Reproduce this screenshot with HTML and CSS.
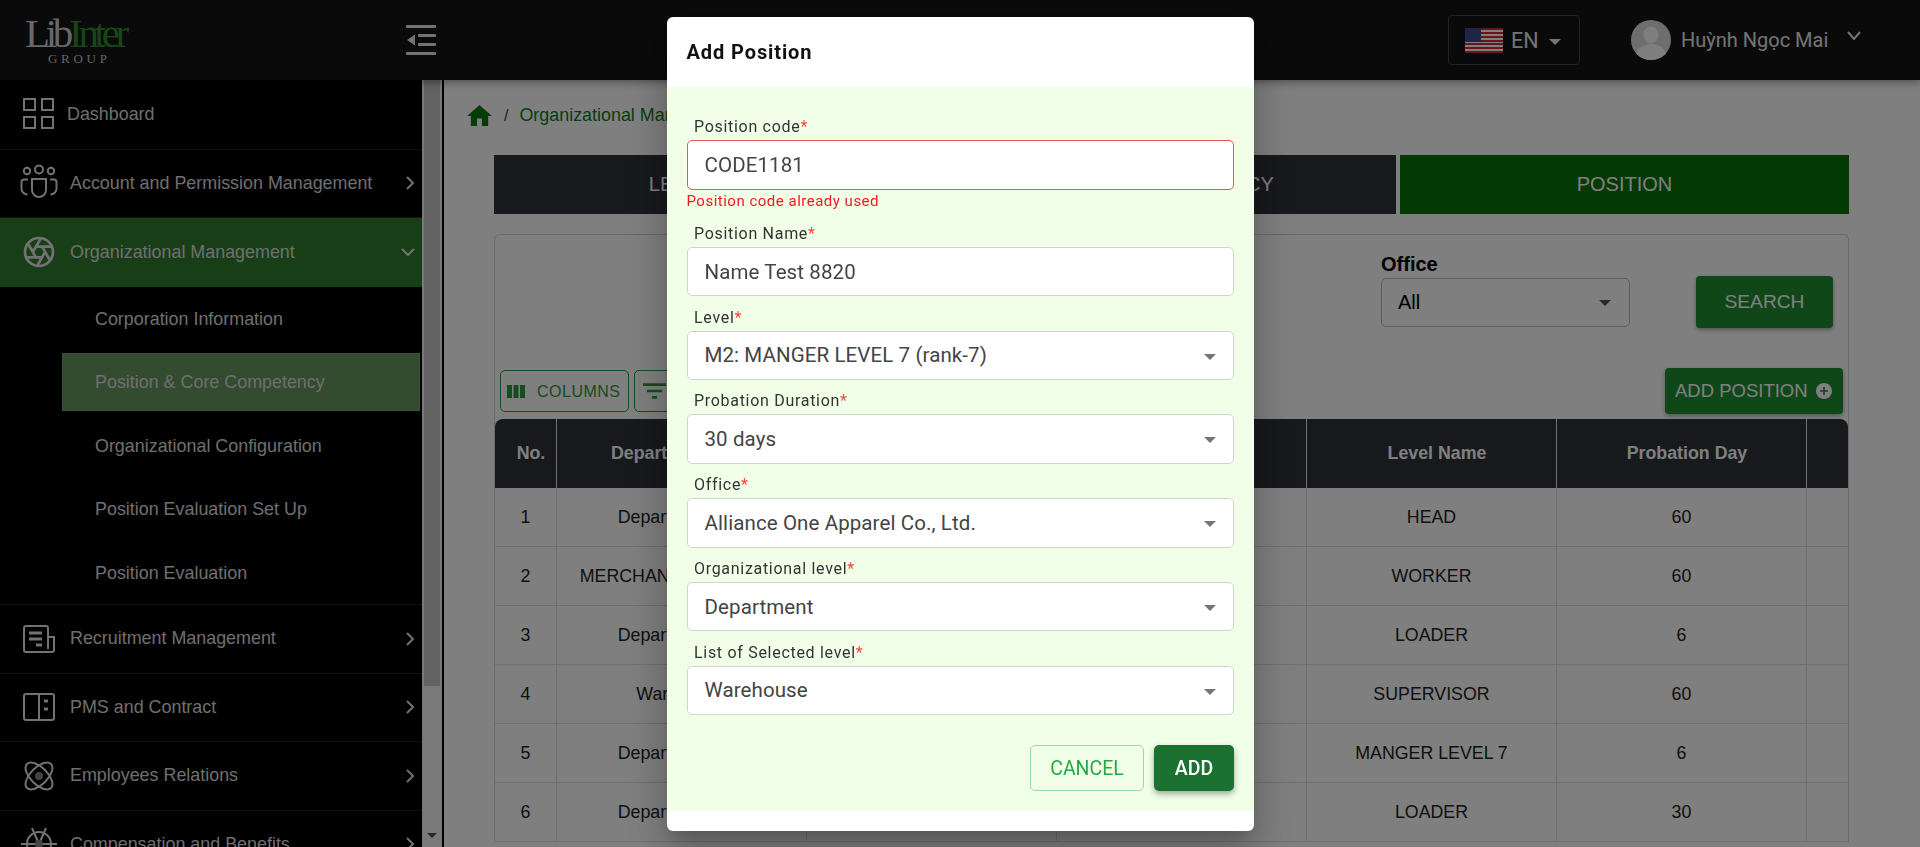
FILE: index.html
```html
<!DOCTYPE html>
<html lang="en">
<head>
  <meta charset="UTF-8">
  <title>Position &amp; Core Competency</title>
  <link rel="stylesheet" href="styles.css">
</head>
<body>
  <!-- Top bar -->
  <header class="topbar">
    <div class="logo">
      <div class="logo-word">Lib<span class="logo-green">Inter</span></div>
      <div class="logo-sub">GROUP</div>
    </div>
    <svg class="menu-toggle" viewBox="0 0 30 30" width="30" height="30">
      <rect x="0" y="0" width="30" height="3" rx="1"/>
      <rect x="12" y="9" width="18" height="3" rx="1"/>
      <rect x="12" y="18" width="18" height="3" rx="1"/>
      <rect x="0" y="27" width="30" height="3" rx="1"/>
      <polygon points="1,15 9,9.5 9,20.5"/>
    </svg>
    <div class="lang">
      <svg class="flag" viewBox="0 0 38 25" width="38" height="25">
        <rect width="38" height="25" fill="#fff"/>
        <g fill="#d8283c">
          <rect y="0" width="38" height="2"/><rect y="4" width="38" height="2"/>
          <rect y="8" width="38" height="2"/><rect y="12" width="38" height="2"/>
          <rect y="15" width="38" height="2"/><rect y="19" width="38" height="2"/>
          <rect y="23" width="38" height="2"/>
        </g>
        <rect width="16" height="14" fill="#3c4a8c"/>
      </svg>
      <span class="lang-code">EN</span>
      <span class="caret caret-light"></span>
    </div>
    <div class="user">
      <svg class="avatar" viewBox="0 0 40 40" width="40" height="40">
        <defs><clipPath id="avatarClip"><circle cx="20" cy="20" r="20"/></clipPath></defs>
        <circle cx="20" cy="20" r="20" fill="#dcdcdc"/>
        <g clip-path="url(#avatarClip)" fill="#fff">
          <ellipse cx="20" cy="15" rx="7.5" ry="8.5"/>
          <ellipse cx="20" cy="36" rx="15" ry="12"/>
        </g>
      </svg>
      <span class="user-name">Huỳnh Ngọc Mai</span>
      <svg class="user-chevron" viewBox="0 0 14 9" width="14" height="9"><polyline points="1,1 7,8 13,1"/></svg>
    </div>
  </header>

  <div class="layout">
    <!-- Sidebar -->
    <aside class="sidebar">
      <a class="nav-item nav-first">
        <svg class="nav-icon" viewBox="0 0 32 32" width="32" height="32">
          <rect x="1" y="1" width="11" height="11"/><rect x="19" y="1" width="11" height="11"/>
          <rect x="1" y="19" width="11" height="11"/><rect x="19" y="19" width="11" height="11"/>
        </svg>
        <span class="nav-label nav-label-tight">Dashboard</span>
      </a>
      <a class="nav-item">
        <svg class="nav-icon" viewBox="0 0 38 37" width="38" height="37">
          <circle cx="7" cy="6.500" r="3.200"/><circle cx="19" cy="5" r="4"/><circle cx="31" cy="6.500" r="3.200"/>
          <path d="M12 14.500h14v11a7 7 0 0 1-14 0z"/>
          <path d="M8 15H4a2.500 2.500 0 0 0-2.500 2.500V24a6 6 0 0 0 6 6"/>
          <path d="M30 15h4a2.500 2.500 0 0 1 2.500 2.500V24a6 6 0 0 1-6 6"/>
        </svg>
        <span class="nav-label">Account and Permission Management</span>
        <svg class="nav-arrow" viewBox="0 0 10 14" width="10" height="14"><polyline points="2,1 8,7 2,13"/></svg>
      </a>
      <a class="nav-item nav-open">
        <svg class="nav-icon" viewBox="0 0 24 24" width="32" height="32" stroke-width="1.500">
          <circle cx="12" cy="12" r="10.500"/>
          <path d="M14.310 8l5.740 9.940M9.690 8h11.480M7.380 12l5.740-9.940M9.690 16L3.950 6.060M14.310 16H2.830M16.620 12l-5.740 9.940"/>
        </svg>
        <span class="nav-label">Organizational Management</span>
        <svg class="nav-arrow" viewBox="0 0 14 10" width="14" height="10"><polyline points="1,2 7,8 13,2"/></svg>
      </a>
      <div class="subnav">
        <a class="subnav-item">Corporation Information</a>
        <a class="subnav-item active">Position &amp; Core Competency</a>
        <a class="subnav-item">Organizational Configuration</a>
        <a class="subnav-item">Position Evaluation Set Up</a>
        <a class="subnav-item">Position Evaluation</a>
      </div>
      <a class="nav-item nav-top">
        <svg class="nav-icon" viewBox="0 0 32 28" width="32" height="28">
          <path d="M25 24V3a2 2 0 0 0-2-2H3a2 2 0 0 0-2 2v22a2 2 0 0 0 2 2h26a2 2 0 0 0 2-2V12h-6"/>
          <path d="M6 8h13M6 14h13M13 20h6" stroke-width="3"/>
        </svg>
        <span class="nav-label">Recruitment Management</span>
        <svg class="nav-arrow" viewBox="0 0 10 14" width="10" height="14"><polyline points="2,1 8,7 2,13"/></svg>
      </a>
      <a class="nav-item">
        <svg class="nav-icon" viewBox="0 0 32 28" width="32" height="28">
          <rect x="1" y="1" width="30" height="26" rx="2"/>
          <path d="M16 1v26"/>
          <path d="M21 8h4M21 16h4" stroke-width="3"/>
        </svg>
        <span class="nav-label">PMS and Contract</span>
        <svg class="nav-arrow" viewBox="0 0 10 14" width="10" height="14"><polyline points="2,1 8,7 2,13"/></svg>
      </a>
      <a class="nav-item">
        <svg class="nav-icon" viewBox="0 0 32 32" width="32" height="32">
          <ellipse cx="16" cy="16" rx="17" ry="8.500" transform="rotate(45 16 16)"/>
          <ellipse cx="16" cy="16" rx="17" ry="8.500" transform="rotate(-45 16 16)"/>
          <circle class="icon-dot" cx="16" cy="16" r="4"/>
        </svg>
        <span class="nav-label">Employees Relations</span>
        <svg class="nav-arrow" viewBox="0 0 10 14" width="10" height="14"><polyline points="2,1 8,7 2,13"/></svg>
      </a>
      <a class="nav-item">
        <svg class="nav-icon" viewBox="0 0 36 36" width="36" height="36">
          <circle cx="18" cy="18" r="12"/>
          <path d="M18 18L11 2M18 18L25 2M0 18h36M18 18v16"/>
          <circle class="icon-dot" cx="18" cy="18" r="4"/>
        </svg>
        <span class="nav-label">Compensation and Benefits</span>
        <svg class="nav-arrow" viewBox="0 0 10 14" width="10" height="14"><polyline points="2,1 8,7 2,13"/></svg>
      </a>
    </aside>
    <div class="rail">
      <div class="rail-thumb"></div>
      <div class="rail-arrow"></div>
    </div>

    <!-- Main content -->
    <main class="content">
      <nav class="crumbs">
        <svg class="crumb-home" viewBox="2 3 20 17" width="25" height="21"><path d="M10 20v-6h4v6h5v-8h3L12 3 2 12h3v8z"/></svg>
        <span class="crumb-sep">/</span>
        <span class="crumb-link">Organizational Management</span>
      </nav>

      <div class="tabs">
        <div class="tab tab-level">LEVEL</div>
        <div class="tab tab-core">POSITION CORE COMPETENCY</div>
        <div class="tab tab-position">POSITION</div>
      </div>

      <section class="panel">
        <div class="filters">
          <div class="filter-field">
            <label class="filter-label">Office</label>
            <div class="filter-select">All<span class="caret caret-dark"></span></div>
          </div>
          <button class="btn-solid btn-search">SEARCH</button>
        </div>

        <div class="toolbar">
          <button class="btn-outline btn-columns">
            <svg viewBox="0 0 18 13" width="18" height="13"><rect width="5" height="13"/><rect x="6.500" width="5" height="13"/><rect x="13" width="5" height="13"/></svg>
            <span class="btn-text">COLUMNS</span>
          </button>
          <button class="btn-outline btn-filters">
            <svg viewBox="3 6 18 12" width="23" height="16"><path d="M10 18h4v-2h-4v2zM3 6v2h18V6H3zm3 7h12v-2H6v2z"/></svg>
            <span class="btn-text">FILTERS</span>
          </button>
          <button class="btn-solid btn-add">
            ADD POSITION
            <svg viewBox="2 2 20 20" width="16" height="16"><path d="M12 2C6.480 2 2 6.480 2 12s4.480 10 10 10 10-4.480 10-10S17.520 2 12 2zm5 11h-4v4h-2v-4H7v-2h4V7h2v4h4v2z"/></svg>
          </button>
        </div>

        <table class="grid">
          <colgroup>
            <col class="col-no"><col class="col-wide"><col class="col-wide"><col class="col-wide">
            <col class="col-wide"><col class="col-wide"><col class="col-end">
          </colgroup>
          <thead>
            <tr>
              <th>No.</th><th>Department Name</th><th>Position Code</th><th>Position Name</th>
              <th>Level Name</th><th>Probation Day</th><th></th>
            </tr>
          </thead>
          <tbody>
            <tr><td>1</td><td>Department 123</td><td></td><td></td><td>HEAD</td><td>60</td><td></td></tr>
            <tr><td>2</td><td>MERCHANDISING DEPT</td><td></td><td></td><td>WORKER</td><td>60</td><td></td></tr>
            <tr><td>3</td><td>Department 123</td><td></td><td></td><td>LOADER</td><td>6</td><td></td></tr>
            <tr><td>4</td><td>Warehouse</td><td></td><td></td><td>SUPERVISOR</td><td>60</td><td></td></tr>
            <tr><td>5</td><td>Department 123</td><td></td><td></td><td>MANGER LEVEL 7</td><td>6</td><td></td></tr>
            <tr><td>6</td><td>Department 123</td><td></td><td></td><td>LOADER</td><td>30</td><td></td></tr>
          </tbody>
        </table>
      </section>
    </main>
  </div>

  <!-- Add Position dialog -->
  <div class="backdrop"></div>
  <div class="modal">
    <h2 class="modal-title">Add Position</h2>
    <form class="modal-body">
      <div class="field">
        <label>Position code<span class="req">*</span></label>
        <input class="control control-error" type="text" value="CODE1181">
        <div class="field-error">Position code already used</div>
      </div>
      <div class="field">
        <label>Position Name<span class="req">*</span></label>
        <input class="control" type="text" value="Name Test 8820">
      </div>
      <div class="field">
        <label>Level<span class="req">*</span></label>
        <div class="control">M2: MANGER LEVEL 7 (rank-7)<span class="caret caret-grey"></span></div>
      </div>
      <div class="field">
        <label>Probation Duration<span class="req">*</span></label>
        <div class="control">30 days<span class="caret caret-grey"></span></div>
      </div>
      <div class="field">
        <label>Office<span class="req">*</span></label>
        <div class="control">Alliance One Apparel Co., Ltd.<span class="caret caret-grey"></span></div>
      </div>
      <div class="field">
        <label>Organizational level<span class="req">*</span></label>
        <div class="control">Department<span class="caret caret-grey"></span></div>
      </div>
      <div class="field">
        <label>List of Selected level<span class="req">*</span></label>
        <div class="control">Warehouse<span class="caret caret-grey"></span></div>
      </div>
      <div class="modal-actions">
        <button type="button" class="btn-cancel">CANCEL</button>
        <button type="button" class="btn-confirm">ADD</button>
      </div>
    </form>
  </div>
</body>
</html>
```

FILE: styles.css
```css
:root {
  --dark: #2e323a;
  --line: #dedede;
}
* {
  box-sizing: border-box;
}
html, body {
  height: 100%;
}
body {
  margin: 0;
  overflow: hidden;
  background: #fff;
  color: #000;
  font-family: "Liberation Sans", Arial, sans-serif;
  font-size: 16px;
}
button {
  font: inherit;
  cursor: pointer;
}

/* Top bar */
.topbar {
  position: relative;
  z-index: 1;
  display: flex;
  align-items: center;
  height: 80px;
  padding-right: 50px;
  background: #151515;
  color: #fff;
  box-shadow: 0 2px 8px rgba(0, 0, 0, 0.4);
}
.logo {
  width: 406px;
  padding-left: 25px;
}
.logo-word {
  width: 108px;
  font-family: "Liberation Serif", serif;
  font-size: 41px;
  line-height: 37px;
  letter-spacing: -4.300px;
  color: #d0d0d0;
}
.logo-green {
  color: #2f8a2f;
}
.logo-sub {
  width: 108px;
  padding-left: 23px;
  font-family: "Liberation Serif", serif;
  font-size: 13px;
  line-height: 14px;
  letter-spacing: 3.700px;
  color: #c4c4c4;
}
.menu-toggle {
  fill: #e4e4e4;
}
.lang {
  display: flex;
  align-items: center;
  width: 132px;
  height: 50px;
  margin-left: auto;
  padding-left: 16px;
  border: 1px solid #444;
  border-radius: 4px;
}
.lang-code {
  margin-left: 8px;
  font-family: Roboto, sans-serif;
  font-size: 21.500px;
  color: #e8e8e8;
}
.caret {
  display: block;
  width: 0;
  height: 0;
  border-left: 6px solid transparent;
  border-right: 6px solid transparent;
}
.caret-light {
  margin-left: 10px;
  margin-top: 3px;
  border-top: 6px solid #e8e8e8;
}
.user {
  display: flex;
  align-items: center;
  width: 290px;
  padding-left: 51px;
}
.avatar {
  flex: none;
}
.user-name {
  margin-left: 10px;
  font-family: Roboto, sans-serif;
  font-size: 20px;
  color: #e8e8e8;
}
.user-chevron {
  margin: -9px 0 0 19px;
  fill: none;
  stroke: #e8e8e8;
  stroke-width: 2;
}

/* Layout */
.layout {
  display: flex;
  height: calc(100vh - 80px);
}
.sidebar {
  flex: none;
  width: 422px;
  overflow: hidden;
  background: #000;
  color: #ddd;
}
.nav-item {
  position: relative;
  display: flex;
  align-items: center;
  height: 68.500px;
  padding-left: 70px;
  border-bottom: 1px solid #222;
}
.nav-first {
  height: 69.500px;
}
.nav-top {
  height: 69.500px;
  border-top: 1px solid #222;
}
.nav-open {
  background: #2f7d2f;
  border-bottom: 0;
}
.nav-icon {
  position: absolute;
  left: 39px;
  top: 50%;
  transform: translate(-50%, -50%);
  fill: none;
  stroke: #e4e4e4;
  stroke-width: 2;
}
.icon-dot {
  fill: #888;
  stroke: none;
}
.nav-label {
  font-size: 17.900px;
  white-space: nowrap;
}
.nav-label-tight {
  margin-left: -3px;
}
.nav-arrow {
  position: absolute;
  right: 7px;
  top: 50%;
  transform: translateY(-50%);
  fill: none;
  stroke: #e4e4e4;
  stroke-width: 2;
}
.subnav {
  display: flex;
  flex-direction: column;
  gap: 5.500px;
  padding: 2.500px 0 3px 62px;
}
.subnav-item {
  display: flex;
  align-items: center;
  width: 358px;
  height: 58px;
  padding: 2px 0 0 33px;
  font-size: 17.900px;
}
.subnav-item.active {
  background: #66985f;
  border: 1px solid #74a66c;
  padding-left: 32px;
}
.rail {
  flex: none;
  display: flex;
  flex-direction: column;
  width: 22px;
  padding-left: 2px;
  padding-right: 2px;
  background: #f3f3f3;
  border-right: 2px solid #000;
}
.rail-thumb {
  height: 606px;
  background: #c4c4c4;
}
.rail-arrow {
  width: 0;
  height: 0;
  margin: auto auto 9px;
  border-left: 5px solid transparent;
  border-right: 5px solid transparent;
  border-top: 5px solid #505050;
}

/* Main */
.content {
  flex: 1;
  min-width: 0;
  overflow: hidden;
  padding: 0 71px 0 50px;
}
.crumbs {
  display: flex;
  align-items: center;
  height: 71px;
  margin: 0 0 4px -27px;
}
.crumb-home {
  fill: #0c7a0c;
}
.crumb-sep {
  margin: 0 11px 0 12px;
  color: #3a3a3a;
}
.crumb-link {
  color: #117a20;
  font-size: 17.900px;
}
.tabs {
  display: flex;
  gap: 4px;
  height: 59px;
}
.tab {
  display: flex;
  align-items: center;
  justify-content: center;
  background: var(--dark);
  color: #fff;
  font-size: 20px;
}
.tab-level {
  width: 370px;
  padding-left: 2px;
}
.tab-core {
  flex: 1;
  padding-right: 22px;
}
.tab-position {
  width: 449px;
  background: #067206;
}
.panel {
  margin-top: 20px;
  border: 1px solid #d4d4d4;
  border-bottom: 0;
  border-radius: 6px 6px 0 0;
}
.filters {
  display: flex;
  justify-content: flex-end;
  align-items: flex-end;
  gap: 66px;
  padding: 18px 15px 0 0;
}
.filter-label {
  display: block;
  margin-bottom: 3px;
  font-size: 20px;
  line-height: 22px;
  font-weight: bold;
}
.filter-select {
  position: relative;
  display: flex;
  align-items: center;
  width: 249px;
  height: 49px;
  margin-bottom: 1px;
  padding-left: 16px;
  border: 1px solid #bdbdbd;
  border-radius: 5px;
  font-size: 20px;
}
.caret-dark {
  position: absolute;
  right: 18px;
  top: 21px;
  border-top: 6px solid #555;
}
.btn-solid {
  border: 0;
  border-radius: 4px;
  background: #1f8f30;
  color: #fff;
  box-shadow: 0 2px 4px rgba(0, 0, 0, 0.35);
}
.btn-search {
  width: 137px;
  height: 52px;
  font-size: 19.200px;
}
.toolbar {
  display: flex;
  align-items: center;
  height: 46px;
  margin-top: 40px;
  padding: 0 5px;
}
.btn-outline {
  display: flex;
  align-items: center;
  height: 42px;
  border: 1px solid #2a9a40;
  border-radius: 5px;
  background: transparent;
  color: #2a9a40;
  font-family: "Liberation Sans", Arial, sans-serif;
  font-size: 16px;
  letter-spacing: 0.5px;
  fill: #2a9a40;
}
.btn-text {
  padding-top: 2px;
}
.btn-columns {
  gap: 12px;
  width: 129px;
  padding: 0 6px;
  white-space: nowrap;
}
.btn-filters {
  gap: 8px;
  margin-left: 5px;
  padding: 0 8px;
}
.btn-add {
  display: flex;
  align-items: center;
  gap: 8px;
  width: 178px;
  height: 46px;
  margin-left: auto;
  padding: 0 10px;
  font-size: 18.500px;
  white-space: nowrap;
  fill: #fff;
}
.grid {
  width: 100%;
  margin-top: 5px;
  border-collapse: separate;
  border-spacing: 0;
  table-layout: fixed;
}
.col-no {
  width: 62px;
}
.col-wide {
  width: 250px;
}
.col-end {
  width: auto;
}
.grid th {
  height: 69px;
  padding-left: 12px;
  background: var(--dark);
  color: #fff;
  font-weight: bold;
  font-size: 17.800px;
  border-right: 1px solid #e4e4e4;
}
.grid th:first-child {
  border-top-left-radius: 8px;
}
.grid th:last-child {
  border-right: 0;
  border-top-right-radius: 8px;
}
.grid td {
  height: 59px;
  text-align: center;
  font-size: 17.800px;
  color: #222;
  border-right: 1px solid var(--line);
  border-bottom: 1px solid var(--line);
}
.grid td:last-child {
  border-right: 0;
}

/* Dialog */
.backdrop {
  position: fixed;
  inset: 0;
  z-index: 5;
  background: rgba(0, 0, 0, 0.5);
}
.modal {
  position: fixed;
  z-index: 6;
  top: 17px;
  left: 666.500px;
  width: 587.500px;
  height: 813.500px;
  background: #fff;
  border-radius: 6px;
  box-shadow: 0 11px 15px -7px rgba(0, 0, 0, 0.2), 0 24px 38px 3px rgba(0, 0, 0, 0.14), 0 9px 46px 8px rgba(0, 0, 0, 0.12);
  font-family: Roboto, sans-serif;
}
.modal-title {
  height: 70px;
  margin: 0;
  padding-left: 20px;
  font-size: 20px;
  line-height: 70px;
  font-weight: 700;
  letter-spacing: 0.900px;
  color: #111;
}
.modal-body {
  display: flex;
  flex-direction: column;
  gap: 11.250px;
  height: 724px;
  padding: 30px 20px 0;
  background: #f1ffe9;
}
.field label {
  display: block;
  height: 20px;
  margin: 0 0 3px 7.500px;
  font-size: 16px;
  line-height: 20px;
  letter-spacing: 0.700px;
  color: #333;
}
.req {
  color: #f44;
}
.control {
  position: relative;
  display: flex;
  align-items: center;
  width: 100%;
  height: 49.500px;
  padding: 0 17px;
  border: 1px solid #d2d2d2;
  border-radius: 5px;
  background: #fff;
  color: #444;
  font-family: Roboto, sans-serif;
  font-size: 20.500px;
  letter-spacing: 0.1px;
}
.control-error {
  border-color: #e25a5a;
}
.caret-grey {
  position: absolute;
  right: 17px;
  top: 22px;
  border-top: 6px solid #757575;
}
.field-error {
  height: 23px;
  padding-top: 2px;
  font-size: 15px;
  line-height: 18px;
  letter-spacing: 0.500px;
  color: #f01c1c;
}
.modal-actions {
  display: flex;
  justify-content: flex-end;
  gap: 10px;
  margin-top: 19px;
}
.btn-cancel,
.btn-confirm {
  height: 46px;
  border-radius: 5px;
  font-family: Roboto, sans-serif;
  font-size: 19.500px;
}
.btn-cancel {
  width: 114px;
  border: 1px solid #96dc9e;
  background: transparent;
  color: #28a745;
}
.btn-confirm {
  width: 80px;
  border: 0;
  background: #1b7230;
  color: #fff;
  font-weight: 500;
  box-shadow: 0 3px 6px rgba(0, 0, 0, 0.35);
}
```
